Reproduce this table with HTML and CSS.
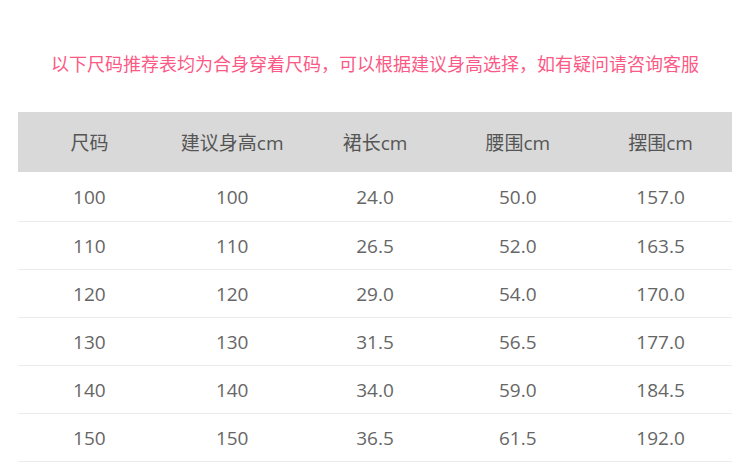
FILE: index.html
```html
<!DOCTYPE html>
<html lang="zh-CN">
<head>
<meta charset="utf-8">
<link rel="stylesheet" href="styles.css">
</head>
<body>
<div class="page">
  <p class="note">以下尺码推荐表均为合身穿着尺码，可以根据建议身高选择，如有疑问请咨询客服</p>
  <table class="size-table">
    <thead>
      <tr><th>尺码</th><th>建议身高cm</th><th>裙长cm</th><th>腰围cm</th><th>摆围cm</th></tr>
    </thead>
    <tbody>
      <tr><td>100</td><td>100</td><td>24.0</td><td>50.0</td><td>157.0</td></tr>
      <tr><td>110</td><td>110</td><td>26.5</td><td>52.0</td><td>163.5</td></tr>
      <tr><td>120</td><td>120</td><td>29.0</td><td>54.0</td><td>170.0</td></tr>
      <tr><td>130</td><td>130</td><td>31.5</td><td>56.5</td><td>177.0</td></tr>
      <tr><td>140</td><td>140</td><td>34.0</td><td>59.0</td><td>184.5</td></tr>
      <tr><td>150</td><td>150</td><td>36.5</td><td>61.5</td><td>192.0</td></tr>
    </tbody>
  </table>
</div>
</body>
</html>
```
FILE: styles.css
```css
html, body {
  margin: 0;
  padding: 0;
  background: #fff;
}
.page {
  padding: 0 18px;
  font-family: "Open Sans", "Noto Sans CJK SC", sans-serif;
}
.note {
  margin: 0;
  padding-top: 50px;
  height: 62px;
  box-sizing: border-box;
  line-height: 26px;
  font-size: 18px;
  color: #fb5a86;
  text-align: center;
  font-family: "Noto Sans CJK SC", sans-serif;
}
.size-table {
  margin-top: 50px;
  width: 714px;
  border-collapse: collapse;
  table-layout: fixed;
}
.size-table th {
  background: #d9d9d9;
  height: 60px;
  padding: 0;
  font-weight: normal;
  font-size: 19px;
  color: #555;
  text-align: center;
}
.size-table td {
  height: 47px;
  padding: 0;
  font-size: 19px;
  color: #666;
  text-align: center;
  border-bottom: 1px solid #ececec;
}
.size-table tbody tr:first-child td {
  height: 49px;
}
```
